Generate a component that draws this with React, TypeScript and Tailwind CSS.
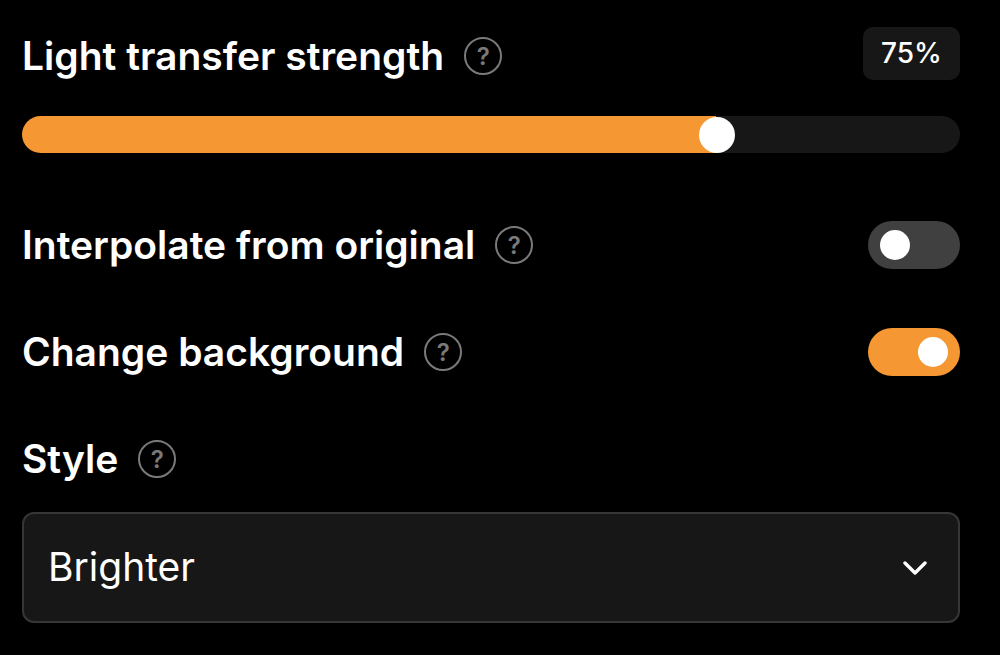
import React, { useId, useState } from 'react';

const THUMB = 36;

function HelpButton({ topic }: { topic: string }) {
  return (
    <button
      type="button"
      aria-label={`Help: ${topic}`}
      className="flex size-[38px] shrink-0 items-center justify-center rounded-full border-2 border-[#7a7a7a] pt-0.5 text-2xl leading-none font-semibold text-[#7a7a7a]"
    >
      ?
    </button>
  );
}

interface FieldLabelProps {
  htmlFor: string;
  text: string;
}

function FieldLabel({ htmlFor, text }: FieldLabelProps) {
  return (
    <div className="flex items-center gap-5">
      <label htmlFor={htmlFor} className="text-[39px] leading-[48px] font-semibold">
        {text}
      </label>
      <HelpButton topic={text} />
    </div>
  );
}

interface ToggleRowProps {
  text: string;
  checked: boolean;
  onChange: (checked: boolean) => void;
}

function ToggleRow({ text, checked, onChange }: ToggleRowProps) {
  const id = useId();

  return (
    <div className="flex items-center justify-between">
      <FieldLabel htmlFor={id} text={text} />
      <input
        id={id}
        type="checkbox"
        role="switch"
        checked={checked}
        onChange={(e) => onChange(e.target.checked)}
        className="flex h-12 w-[92px] shrink-0 cursor-pointer appearance-none items-center rounded-full bg-[#404040] px-3 before:size-[30px] before:rounded-full before:bg-white before:content-[''] checked:justify-end checked:bg-[#f59733]"
      />
    </div>
  );
}

export default function App() {
  const [strength, setStrength] = useState(75);
  const [interpolate, setInterpolate] = useState(false);
  const [changeBackground, setChangeBackground] = useState(true);
  const [style, setStyle] = useState('Brighter');

  // the fill stops under the middle of the thumb
  const fill = `calc(${THUMB / 2}px + (100% - ${THUMB}px) * ${strength / 100})`;

  return (
    <main className="min-h-screen bg-black pt-[27px] pr-10 pb-8 pl-[22px] font-['Inter',sans-serif] text-white">
      <div className="flex h-[58px] items-start justify-between">
        <div className="flex h-full items-center">
          <FieldLabel htmlFor="strength" text="Light transfer strength" />
        </div>
        <output
          htmlFor="strength"
          className="flex h-[53px] min-w-[97px] items-center justify-center rounded-[10px] bg-[#171717] px-4 pb-0.5 text-[28px] leading-none font-medium"
        >
          {strength}%
        </output>
      </div>

      <input
        id="strength"
        type="range"
        min={0}
        max={100}
        value={strength}
        onChange={(e) => setStrength(Number(e.target.value))}
        style={{ backgroundImage: `linear-gradient(to right, #f59733 ${fill}, #171717 ${fill})` }}
        className="mt-[31px] block h-[37px] w-full cursor-pointer appearance-none rounded-full [&::-webkit-slider-thumb]:size-9 [&::-webkit-slider-thumb]:appearance-none [&::-webkit-slider-thumb]:rounded-full [&::-webkit-slider-thumb]:bg-white"
      />

      <div className="mt-[68px] flex flex-col gap-[59px]">
        <ToggleRow text="Interpolate from original" checked={interpolate} onChange={setInterpolate} />
        <ToggleRow text="Change background" checked={changeBackground} onChange={setChangeBackground} />
        <FieldLabel htmlFor="style" text="Style" />
      </div>

      <div className="relative mt-[29px]">
        <select
          id="style"
          value={style}
          onChange={(e) => setStyle(e.target.value)}
          className="block h-[111px] w-full cursor-pointer appearance-none rounded-xl border-2 border-[#363636] bg-[#171717] pr-20 pl-6 text-[39px]"
        >
          <option>Brighter</option>
        </select>
        <svg
          viewBox="0 0 24 14"
          fill="none"
          stroke="currentColor"
          strokeWidth="3.4"
          strokeLinecap="round"
          strokeLinejoin="round"
          className="pointer-events-none absolute inset-y-0 right-[33px] my-auto h-[14px] w-6"
        >
          <path d="M2 2l10 10L22 2" />
        </svg>
      </div>
    </main>
  );
}
